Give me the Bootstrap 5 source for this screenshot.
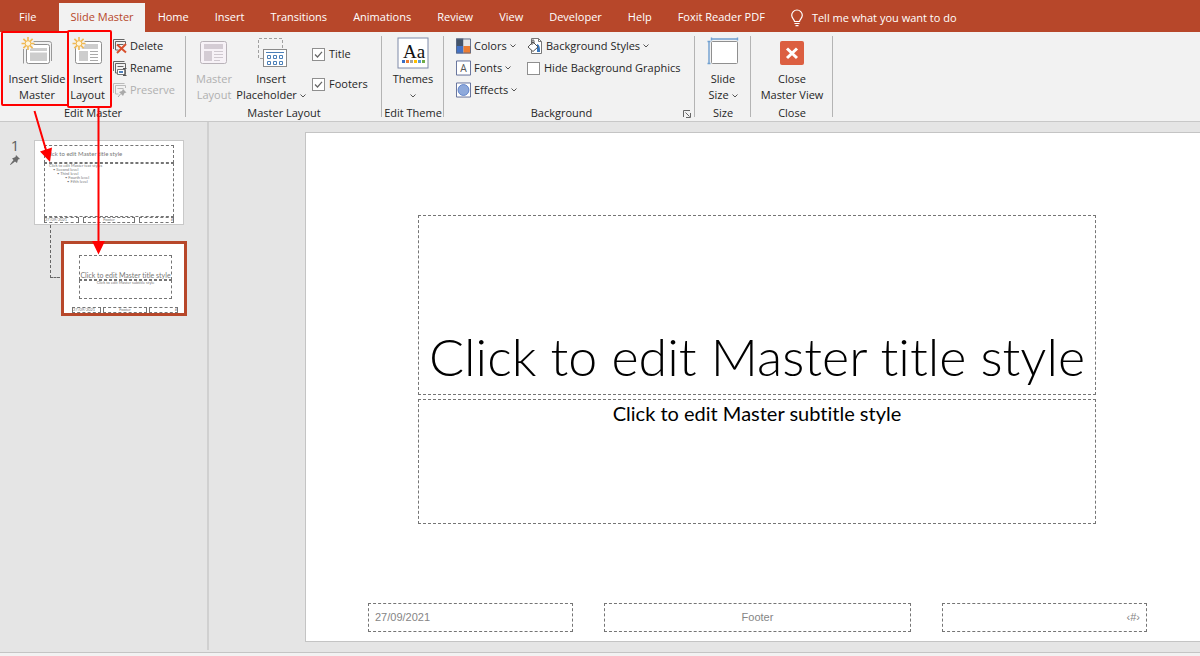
<!DOCTYPE html>
<html lang="en">
<head>
<meta charset="utf-8">
<meta name="viewport" content="width=device-width, initial-scale=1">
<title>Slide Master</title>
<link href="https://cdn.jsdelivr.net/npm/bootstrap@5.3.0/dist/css/bootstrap.min.css" rel="stylesheet">
<style>
  body { font-family: "Open Sans", "Noto Sans", sans-serif; font-size: 11px; line-height: 16px; color: #262626; background: #f2f2f2; }
  .tabstrip { background: #b7472a; height: 32px; }
  .tabstrip .nav-link { color: #fff; padding: 6px 13px 7px; line-height: 16px; margin-top: 3px; white-space: nowrap; }
  .tabstrip .file-tab { padding-left: 19px; padding-right: 23px; }
  .tabstrip .nav-link.active { background: #f2f2f2; color: #b7472a; padding-left: 11px; padding-right: 11px; }
  .tellme { color: #fff; background: none; border: 0; padding: 3px 0 0; margin-left: 12px; }
  .ribbon { background: #f2f2f2; border-bottom: 1px solid #c8c8c8; height: 90px; }
  .group { position: relative; padding-top: 3px; flex: none; }
  .group::after { content: ""; position: absolute; right: 0; top: 4px; bottom: 4px; border-right: 1px solid #b4b4b4; }
  .group-body { height: 70px; }
  .group-name { line-height: 16px; text-align: center; white-space: nowrap; }
  .rb { background: none; border: 0; padding: 0; color: inherit; white-space: nowrap; text-align: center; }
  .rb svg { display: block; flex: none; }
  .rb-lg { padding-top: 2px; display: flex; flex-direction: column; align-items: center; gap: 2px; line-height: 16px; }
  .rb-sm { height: 22px; display: flex; align-items: center; gap: 3px; text-align: left; }
  .rb:disabled { color: #b0b0b0; }
  .rb .chev, .chev { display: inline-block; vertical-align: middle; }
  .tick { appearance: none; width: 13px; height: 13px; border: 1px solid #8f8f8f; background: #fff; margin: 0; flex: none; }
  .tick:checked { background: #fff url("data:image/svg+xml,%3Csvg xmlns='http://www.w3.org/2000/svg' viewBox='0 0 11 11'%3E%3Cpath d='M2 5.5 4.5 8 9 2.8' fill='none' stroke='%23666' stroke-width='1.2'/%3E%3C/svg%3E"); }
  .g-edit { width: 186px; } .g-layout { width: 196px; } .g-theme { width: 62px; }
  .g-back { width: 251px; } .g-size { width: 56px; } .g-close { width: 82px; }
  .check-row { height: 30px; }
  .launcher { position: absolute; right: 4px; bottom: 3px; }
  .work { background: #e5e5e5; border-bottom: 1px solid #c4c4c4; margin-bottom: 3px; }
  .thumbs { width: 209px; border-right: 2px solid #d0d0d0; padding-top: 18px; margin-bottom: 2px; flex: none; }
  .marker { width: 34px; color: #606060; font-size: 15px; line-height: 10px; padding-right: 4px; text-align: center; }
  .marker svg { margin-top: 5px; }
  .ph { border: 1px dashed #757575; }
  .thumb { background: #fff; color: #777; font-family: Lato, sans-serif; font-variant-ligatures: none; white-space: nowrap; overflow: hidden; }
  .thumb-master { width: 150px; height: 85px; border: 1px solid #c8c8c8; padding: 4px 9px 0; }
  .thumb-layout { width: 126px; height: 75px; border: 3px solid #b7472a; padding: 11px 6px 0 8px; margin: 16px 0 0 1px; }
  .thumb-layout .wide { margin: 0 6px 0 7px; }
  .link-line { width: 10px; height: 53px; border-left: 1px dashed #666; border-bottom: 1px dashed #666; margin-left: 50px; flex: none; }
  .foot { display: grid; grid-template-columns: 2fr 3fr 2fr; }
  .slide { background: #fff; border: 1px solid #c4c4c4; border-right: 0; margin: 10px 0 10px 96px; padding: 82px 53px 9px 62px; min-width: 0; font-variant-ligatures: none; }
  .slide-title { margin: 0 51px 4px 50px; height: 180px; font-family: Lato, sans-serif; font-weight: 300; font-size: 52px; line-height: 60px; color: #000; padding-bottom: 8px; white-space: nowrap; }
  .slide-sub { margin: 0 51px 0 50px; height: 125px; font-family: Lato, sans-serif; font-size: 20px; line-height: 26px; color: #000; }
  .slide .foot { gap: 31px; color: #858585; font: 11px/27px "Liberation Sans", sans-serif; }
  .slide .foot .ph { padding: 0 6px; height: 29px; }
  .t7 { font-size: 7px; line-height: 16px; }
  .t6 { font-size: 6px; line-height: 16px; }
  .t4 { font-size: 4px; line-height: 4px; }
  .notes { position: absolute; left: 0; top: 0; pointer-events: none; }
</style>
<script src="https://cdn.jsdelivr.net/npm/bootstrap@5.3.0/dist/js/bootstrap.bundle.min.js"></script>
</head>
<body class="d-flex flex-column min-vh-100 position-relative overflow-hidden">
<header>
  <nav class="tabstrip d-flex">
    <div class="nav flex-nowrap">
      <a class="nav-link file-tab" href="#">File</a>
      <a class="nav-link active" href="#">Slide Master</a>
      <a class="nav-link" href="#">Home</a>
      <a class="nav-link" href="#">Insert</a>
      <a class="nav-link" href="#">Transitions</a>
      <a class="nav-link" href="#">Animations</a>
      <a class="nav-link" href="#">Review</a>
      <a class="nav-link" href="#">View</a>
      <a class="nav-link" href="#">Developer</a>
      <a class="nav-link" href="#">Help</a>
      <a class="nav-link" href="#">Foxit Reader PDF</a>
    </div>
    <button class="tellme d-flex align-items-center gap-2 text-nowrap">
      <svg width="14" height="18" viewBox="1 0 14 18" fill="none" stroke="#fff" stroke-width="1.2"><path d="M5.500 12.500c0-2-2.800-3.200-2.800-6.200a5.300 5.300 0 0 1 10.600 0c0 3-2.800 4.200-2.800 6.200zM5.500 14.500h5M6.500 16.600h3"/></svg>
      <span>Tell me what you want to do</span>
    </button>
  </nav>

  <div class="ribbon d-flex">
    <section class="group g-edit">
      <div class="group-body d-flex">
        <button class="rb rb-lg" style="width:74px">
          <svg width="32" height="32" viewBox="0 0 32 32"><path d="M2.500 12v14.500M9 4.500h19q2.500 0 2.500 2V24" fill="none" stroke="#999"/><rect x="5.500" y="7.500" width="23" height="19" rx="2" fill="#fff" stroke="#8f8f8f"/><path d="M9 11h17v3H9zM9 15.500h17V24H9z" fill="#cdcdcd"/><circle cx="7" cy="6.500" r="6" fill="#f2f2f2"/><g stroke="#f0b952" stroke-width="1.600"><path d="M7 0v13M.5 6.500h13M2.400 1.900l9.200 9.200M11.600 1.900l-9.200 9.200"/></g><circle cx="7" cy="6.500" r="2.800" fill="#fff6dc" stroke="#f0b952"/></svg>
          <span>Insert Slide<br>Master</span>
        </button>
        <button class="rb rb-lg" style="width:27px">
          <svg width="32" height="32" viewBox="0 0 32 32"><rect x="3.500" y="4.500" width="26" height="22" rx="2" fill="#fff" stroke="#8f8f8f"/><path d="M8 7h18v5H8zM7 14h9v10H7z" fill="#cdcdcd"/><path d="M18 14.500h8M18 17.500h8M18 20.500h8M18 23.500h8" stroke="#aaa"/><circle cx="7" cy="6.500" r="6" fill="#f2f2f2"/><g stroke="#f0b952" stroke-width="1.600"><path d="M7 0v13M.5 6.500h13M2.400 1.900l9.200 9.200M11.600 1.900l-9.200 9.200"/></g><circle cx="7" cy="6.500" r="2.800" fill="#fff6dc" stroke="#f0b952"/></svg>
          <span>Insert<br>Layout</span>
        </button>
        <div class="ms-2 ps-1">
          <button class="rb rb-sm"><svg width="14" height="16" viewBox="0 0 14 16"><path d="M.5 11V1.500h11M2.500 12V3.500h10V6M2.500 12h3M4.500 6.500h6" fill="none" stroke="#666"/><path d="M4 6.500l9 8M13 6l-9 9" stroke="#d8502e" stroke-width="2"/></svg>Delete</button>
          <button class="rb rb-sm"><svg width="14" height="16" viewBox="0 0 14 16"><path d="M.5 11V1.500h11M2.500 13V3.500h10V9M2.500 13H5M4.500 6.500h6" fill="none" stroke="#666"/><path d="M4.500 9.500h8v5h-8z" fill="#fff" stroke="#777"/><path d="M6 11h4v2H6z" fill="#4f81bd"/><path d="M10 8.500h3.500M10 15.500h3.500M11.800 8.500v7" stroke="#555"/></svg>Rename</button>
          <button class="rb rb-sm" disabled><svg width="14" height="16" viewBox="0 0 14 16"><path d="M.5 11V1.500h11M2.500 12V3.500h10V6M2.500 12h3M4.500 6.500h6" fill="none" stroke="#bbb"/><path d="M10 7l3.500 3.500-2 .5-1.500 3-4-4 3-1z" fill="#aaa"/><path d="M7.500 12 5 15" stroke="#aaa"/></svg>Preserve</button>
        </div>
      </div>
      <div class="group-name">Edit Master</div>
    </section>

    <section class="group g-layout">
      <div class="group-body d-flex">
        <button class="rb rb-lg" disabled style="width:56px">
          <svg width="32" height="32" viewBox="0 0 32 32"><rect x="2.500" y="4.500" width="26" height="22" rx="2" fill="#f7f2f7" stroke="#b9b3b9"/><path d="M6 7h19v5H6zM6 14h8v10H6z" fill="#d4ccd4"/><path d="M16 14.500h9M16 17.500h9M16 20.500h9M16 23.500h6" stroke="#cfc8cf"/></svg>
          <span>Master<br>Layout</span>
        </button>
        <button class="rb rb-lg" style="width:58px">
          <svg width="32" height="32" viewBox="0 0 32 32"><path d="M8 21.500H3.500v-20h24V12" fill="none" stroke="#a0a0a0" stroke-dasharray="3 2"/><rect x="8.500" y="12.500" width="23" height="17" fill="#fff" stroke="#8a8a8a"/><path d="M11 15.500h18" stroke="#4a7fb8"/><path d="M12.500 18.500h3v3h-3zM18.500 18.500h3v3h-3zM24.500 18.500h3v3h-3zM12.500 24.500h3v3h-3zM18.500 24.500h3v3h-3zM24.500 24.500h3v3h-3z" fill="none" stroke="#4a7fb8"/></svg>
          <span>Insert<br>Placeholder <svg class="chev" width="6" height="4" viewBox="0 0 6 4" fill="none" stroke="#555"><path d="M.5.5 3 3 5.500.5"/></svg></span>
        </button>
        <div class="ps-2 ms-1 pt-1">
          <div class="check-row d-flex align-items-center gap-1 text-nowrap"><input class="tick" type="checkbox" id="ck-title" checked><label for="ck-title">Title</label></div>
          <div class="check-row d-flex align-items-center gap-1 text-nowrap"><input class="tick" type="checkbox" id="ck-foot" checked><label for="ck-foot">Footers</label></div>
        </div>
      </div>
      <div class="group-name">Master Layout</div>
    </section>

    <section class="group g-theme">
      <div class="group-body">
        <button class="rb rb-lg w-100">
          <svg width="32" height="32" viewBox="0 0 32 32"><rect x="1" y="1" width="30" height="30" fill="#fff" stroke="#7f8aa8"/><text x="17" y="21" text-anchor="middle" font-family="Liberation Serif, serif" font-size="19" fill="#111">Aa</text><path d="M5 23h3v3H5z" fill="#3c6fc4"/><path d="M9 23h3v3H9z" fill="#ed7d31"/><path d="M13 23h3v3h-3z" fill="#a5a5a5"/><path d="M17 23h3v3h-3z" fill="#ffc000"/><path d="M21 23h3v3h-3z" fill="#5b9bd5"/><path d="M25 23h3v3h-3z" fill="#70ad47"/></svg>
          <span>Themes<br><svg class="chev" width="6" height="4" viewBox="0 0 6 4" fill="none" stroke="#555"><path d="M.5.5 3 3 5.500.5"/></svg></span>
        </button>
      </div>
      <div class="group-name">Edit Theme</div>
    </section>

    <section class="group g-back">
      <div class="group-body d-flex ps-2">
        <div class="ms-1" style="width:71px">
          <button class="rb rb-sm"><svg width="15" height="16" viewBox="0 0 16 16"><path d="M0 0h8v8H0z" fill="#44546a"/><path d="M8 0h8v8H8z" fill="#e7e6e6"/><path d="M0 8h8v8H0z" fill="#4472c4"/><path d="M8 8h8v8H8z" fill="#ed7d31"/><path d="M.5.5h15v15H.5z" fill="none" stroke="#5c6a85"/></svg>Colors <svg class="chev" width="6" height="4" viewBox="0 0 6 4" fill="none" stroke="#555"><path d="M.5.5 3 3 5.500.5"/></svg></button>
          <button class="rb rb-sm"><svg width="15" height="16" viewBox="0 0 16 16"><path d="M.5.5h15v15H.5z" fill="#fff" stroke="#5c6a95"/><text x="8" y="12" text-anchor="middle" font-size="11" fill="#555">A</text></svg>Fonts <svg class="chev" width="6" height="4" viewBox="0 0 6 4" fill="none" stroke="#555"><path d="M.5.5 3 3 5.500.5"/></svg></button>
          <button class="rb rb-sm"><svg width="15" height="16" viewBox="0 0 16 16"><path d="M.5.5h15v15H.5z" fill="#fff" stroke="#5c6a95"/><circle cx="8" cy="8" r="5.800" fill="#8ea9db" stroke="#5b7fc7"/></svg>Effects <svg class="chev" width="6" height="4" viewBox="0 0 6 4" fill="none" stroke="#555"><path d="M.5.5 3 3 5.500.5"/></svg></button>
        </div>
        <div>
          <button class="rb rb-sm"><svg width="16" height="16" viewBox="0 0 16 16"><path d="M4.500.5h7l3 3v12h-10z" fill="#fff" stroke="#777"/><path d="M11.500.5v3h3" fill="none" stroke="#777"/><path d="M10 6c3 1 3 4 3 8h-3z" fill="#3a78bd"/><path d="M6 4l5 5-5 4.500L1 9z" fill="#fff" stroke="#555"/><path d="M5 7V2.500Q6 1 7 2.500V6" fill="none" stroke="#555"/></svg>Background Styles <svg class="chev" width="6" height="4" viewBox="0 0 6 4" fill="none" stroke="#555"><path d="M.5.5 3 3 5.500.5"/></svg></button>
          <div class="rb-sm text-nowrap gap-1"><input class="tick" type="checkbox" id="ck-hide"><label for="ck-hide">Hide Background Graphics</label></div>
        </div>
      </div>
      <div class="group-name pe-3">Background</div>
      <button class="rb launcher" aria-label="Background settings"><svg width="8" height="8" viewBox="0 0 8 8" fill="none" stroke="#666"><path d="M.5 7V.5H7M2.500 2.500l4 4M7.500 3v4.500H3"/></svg></button>
    </section>

    <section class="group g-size">
      <div class="group-body">
        <button class="rb rb-lg w-100">
          <svg width="32" height="32" viewBox="0 0 32 32"><path d="M4 2h27M2 4v23M4.500 .5v3M30.500 .5v3M.5 4.500h3M.5 26.500h3" stroke="#6f9fd0" stroke-width="1.400"/><rect x="4.500" y="4.500" width="26" height="22" rx="1" fill="#fff" stroke="#8f8f8f"/></svg>
          <span>Slide<br>Size <svg class="chev" width="6" height="4" viewBox="0 0 6 4" fill="none" stroke="#555"><path d="M.5.5 3 3 5.500.5"/></svg></span>
        </button>
      </div>
      <div class="group-name">Size</div>
    </section>

    <section class="group g-close">
      <div class="group-body">
        <button class="rb rb-lg w-100">
          <svg width="32" height="32" viewBox="0 0 32 32"><rect x="4" y="4" width="24" height="24" rx="2" fill="#dc5f41"/><path d="M11 11.500l10 9.500M21 11.500l-10 9.500" stroke="#fff" stroke-width="3"/></svg>
          <span>Close<br>Master View</span>
        </button>
      </div>
      <div class="group-name">Close</div>
    </section>
  </div>
</header>

<main class="work d-flex flex-grow-1">
  <aside class="thumbs">
    <div class="d-flex">
      <div class="marker">1<svg class="d-block mx-auto" width="10" height="10" viewBox="0 0 10 10"><path d="M6 0l4 4-2 .5-1 3.500-2-1.500L.5 10 0 9.500 3.500 5 2 3.500 5.500 2z" fill="#6a6a6a"/></svg></div>
      <div class="thumb thumb-master">
        <div class="ph t6" style="height:18px">Click to edit Master title style</div>
        <div class="ph t4 ps-1" style="height:54px">Click to edit Master text styles
          <div class="ps-1">• Second level</div><div class="ps-2">• Third level</div><div class="ps-3">• Fourth level</div><div class="ps-3">&nbsp; • Fifth level</div>
        </div>
        <div class="foot gap-1 t4"><div class="ph">27/09/2021</div><div class="ph text-center">Footer</div><div class="ph text-end">#</div></div>
      </div>
    </div>
    <div class="d-flex">
      <div class="link-line"></div>
      <div class="thumb thumb-layout">
        <div class="ph wide t7 d-flex align-items-end justify-content-center" style="height:25px"><span class="lh-1">Click to edit Master title style</span></div>
        <div class="ph wide t4 text-center mb-2" style="height:19px">Click to edit Master subtitle style</div>
        <div class="foot t4" style="gap:2px"><div class="ph">27/09/2021</div><div class="ph text-center">Footer</div><div class="ph text-end">#</div></div>
      </div>
    </div>
  </aside>

  <article class="slide flex-grow-1 d-flex flex-column">
    <div class="ph slide-title d-flex align-items-end justify-content-center">Click to edit Master title style</div>
    <div class="ph slide-sub text-center">Click to edit Master subtitle style</div>
    <div class="foot mt-auto">
      <div class="ph">27/09/2021</div>
      <div class="ph text-center">Footer</div>
      <div class="ph text-end">‹#›</div>
    </div>
  </article>
</main>

<svg class="notes" width="200" height="260" viewBox="0 0 200 260" fill="none" stroke="#f00" stroke-width="2" aria-hidden="true">
  <rect x="2" y="32" width="66" height="73" rx="1"/>
  <rect x="68" y="31" width="43" height="76" rx="1"/>
  <path d="M34.500 111 46 150M98.500 106V244"/>
  <path d="M40 151.500 52 147.500 50 162zM92 241h13l-6.500 13.500z" fill="#f00" stroke="none"/>
</svg>
</body>
</html>
